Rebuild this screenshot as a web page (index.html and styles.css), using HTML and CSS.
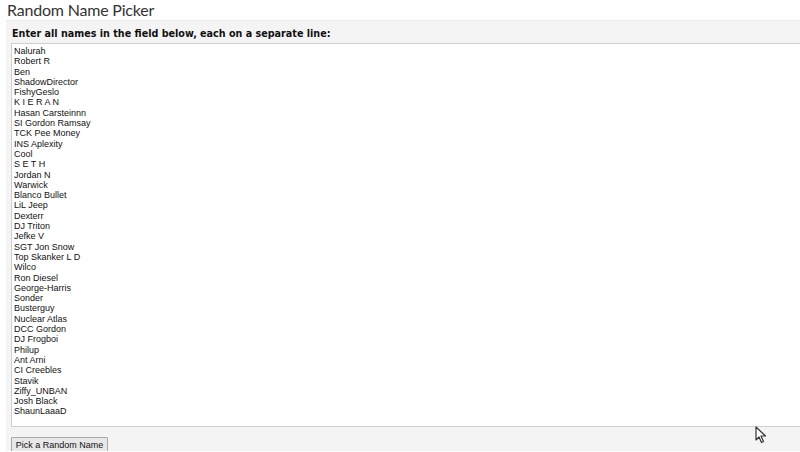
FILE: index.html
```html
<!DOCTYPE html>
<html>
<head>
<meta charset="utf-8">
<title>Random Name Picker</title>
<link rel="stylesheet" href="styles.css">
</head>
<body>
<div class="title">Random Name Picker</div>
<div class="panel">
  <div class="label">Enter all names in the field below, each on a separate line:</div>
  <textarea class="names" spellcheck="false">Nalurah
Robert R
Ben
ShadowDirector
FishyGeslo
K I E R A N
Hasan Carsteinnn
SI Gordon Ramsay
TCK Pee Money
INS Aplexity
Cool
S E T H
Jordan N
Warwick
Blanco Bullet
LiL Jeep
Dexterr
DJ Triton
Jefke V
SGT Jon Snow
Top Skanker L D
Wilco
Ron Diesel
George-Harris
Sonder
Busterguy
Nuclear Atlas
DCC Gordon
DJ Frogboi
Philup
Ant Arni
CI Creebles
Stavik
Ziffy_UNBAN
Josh Black
ShaunLaaaD</textarea>
  <div class="actions"><button class="pick">Pick a Random Name</button></div>
</div>
<svg class="cursor" width="12" height="18" viewBox="0 0 12 18"><path d="M1 1 L1 14 L4 11 L6.5 16.5 L8.5 15.5 L6 10 L10.5 10 Z" fill="#fff" stroke="#333" stroke-width="1.2" stroke-linejoin="round"/></svg>
</body>
</html>
```
FILE: styles.css
```css
html, body {
  margin: 0;
  padding: 0;
  background: #ffffff;
  overflow: hidden;
  height: 452px;
}
body {
  position: relative;
}
.title {
  font-family: Lato, "Open Sans", sans-serif;
  font-size: 16px;
  letter-spacing: -0.2px;
  color: #333;
  line-height: 20px;
  height: 20px;
  padding-left: 7px;
}
.panel {
  margin-left: 6px;
  background: #f4f4f4;
  border-top: 1px solid #ebebeb;
  padding: 5px 0 0 5px;
  height: 431px;
  box-sizing: border-box;
  overflow: hidden;
}
.label {
  font-family: "DejaVu Sans", Verdana, sans-serif;
  font-weight: bold;
  font-size: 9.6px;
  line-height: 14px;
  color: #111;
  padding-left: 1px;
  margin-bottom: 2px;
  padding-top: 1px;
  height: 14px;
}
.names {
  display: block;
  width: calc(100% + 10px);
  height: 384px;
  box-sizing: border-box;
  margin: 0;
  border: 1px solid #cfcfcf;
  background: #fff;
  padding: 2px 2px;
  font-family: "Liberation Sans", Arial, sans-serif;
  font-size: 9px;
  line-height: 10.29px;
  color: #111;
  resize: none;
  overflow: hidden;
  outline: none;
}
.actions {
  padding-top: 7px;
}
.pick {
  font-family: "Liberation Sans", Arial, sans-serif;
  font-size: 9px;
  color: #111;
  height: 16px;
  width: 97px;
  padding: 0;
  background: #e8e8e8;
  border: 1px solid #a8a8a8;
  border-radius: 1px;
}
.cursor {
  position: absolute;
  left: 755px;
  top: 426px;
}
```
